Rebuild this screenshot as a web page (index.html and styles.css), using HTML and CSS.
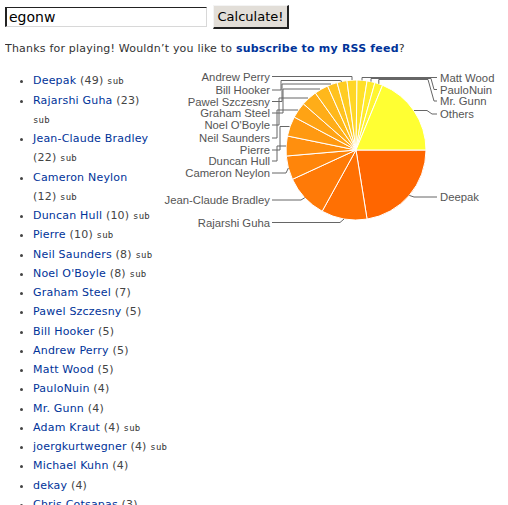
FILE: index.html
```html
<!DOCTYPE html>
<html>
<head>
<meta charset="utf-8">
<link rel="stylesheet" href="styles.css">
</head>
<body>
<form class="search">
  <input class="search-input" type="text" value="egonw">
  <button class="search-btn" type="button">Calculate!</button>
</form>
<p class="thanks">Thanks for playing! Wouldn’t you like to <a class="rss" href="#">subscribe to my RSS feed</a>?</p>
<div class="chart">
  <svg class="pie" width="351" height="180" viewBox="152 58 351 180" xmlns="http://www.w3.org/2000/svg">
    <g stroke="#fff" stroke-width="1" stroke-linejoin="round">
      <path fill="#FF6600" d="M356 150 L426 150 A70 70 0 0 1 367.05 219.12 Z"/>
      <path fill="#FF7003" d="M356 150 L367.05 219.12 A70 70 0 0 1 322.17 211.28 Z"/>
      <path fill="#FF7A07" d="M356 150 L322.17 211.28 A70 70 0 0 1 292.44 179.33 Z"/>
      <path fill="#FF850A" d="M356 150 L292.44 179.33 A70 70 0 0 1 286.26 156.04 Z"/>
      <path fill="#FF8F0E" d="M356 150 L286.26 156.04 A70 70 0 0 1 287.42 135.97 Z"/>
      <path fill="#FF9911" d="M356 150 L287.42 135.97 A70 70 0 0 1 294.22 117.06 Z"/>
      <path fill="#FFA314" d="M356 150 L294.22 117.06 A70 70 0 0 1 303.39 103.83 Z"/>
      <path fill="#FFAD18" d="M356 150 L303.39 103.83 A70 70 0 0 1 315.35 93.01 Z"/>
      <path fill="#FFB81B" d="M356 150 L315.35 93.01 A70 70 0 0 1 327.60 86.02 Z"/>
      <path fill="#FFC21F" d="M356 150 L327.60 86.02 A70 70 0 0 1 337.07 82.61 Z"/>
      <path fill="#FFCC22" d="M356 150 L337.07 82.61 A70 70 0 0 1 346.95 80.59 Z"/>
      <path fill="#FFD625" d="M356 150 L346.95 80.59 A70 70 0 0 1 357.01 80.01 Z"/>
      <path fill="#FFE029" d="M356 150 L357.01 80.01 A70 70 0 0 1 367.05 80.88 Z"/>
      <path fill="#FFEB2C" d="M356 150 L367.05 80.88 A70 70 0 0 1 374.93 82.61 Z"/>
      <path fill="#FFF530" d="M356 150 L374.93 82.61 A70 70 0 0 1 382.55 85.23 Z"/>
      <path fill="#FFFF33" d="M356 150 L382.55 85.23 A70 70 0 0 1 426 150 Z"/>
    </g>
    <g fill="none" stroke="#666" stroke-width="1">
      <path d="M272 76.5 H352 V80"/>
      <path d="M272 90 H281 V80.5 H340 L342 81.5"/>
      <path d="M272 101.5 H282 V84 H331"/>
      <path d="M272 113 H283 V89 H320"/>
      <path d="M272 125 H279 V98 H308"/>
      <path d="M272 138 H277 V110 H298"/>
      <path d="M272 150 H280 V126.5 H289.5"/>
      <path d="M272 161 H277 V146 H286"/>
      <path d="M272 173 H286 L288.4 168"/>
      <path d="M272 200 H301 L304.8 197.7"/>
      <path d="M272 222.5 H340 L344 219"/>
      <path d="M437 77.5 H362 V80.3"/>
      <path d="M437 89.5 H434 L431 78.5 H371 V81.6"/>
      <path d="M437 101 H434 L428 79.5 H378.8 V83.8"/>
      <path d="M437 114 H432 L427 110.5 H414"/>
      <path d="M437 197 H414 L409.3 195.4"/>
    </g>
    <g class="labels" text-anchor="end">
      <text x="270" y="76.5">Andrew Perry</text>
      <text x="270" y="90">Bill Hooker</text>
      <text x="270" y="101.5">Pawel Szczesny</text>
      <text x="270" y="113">Graham Steel</text>
      <text x="270" y="125">Noel O'Boyle</text>
      <text x="270" y="138">Neil Saunders</text>
      <text x="270" y="150">Pierre</text>
      <text x="270" y="161">Duncan Hull</text>
      <text x="270" y="173">Cameron Neylon</text>
      <text x="270" y="200">Jean-Claude Bradley</text>
      <text x="270" y="222.5">Rajarshi Guha</text>
    </g>
    <g class="labels">
      <text x="440" y="77.5">Matt Wood</text>
      <text x="440" y="89.5">PauloNuin</text>
      <text x="440" y="101">Mr. Gunn</text>
      <text x="440" y="114">Others</text>
      <text x="440" y="197">Deepak</text>
    </g>
  </svg>
</div>
<ul class="people">
  <li><a href="#">Deepak</a> (49) <span class="sub">sub</span></li>
  <li><a href="#">Rajarshi Guha</a> (23) <span class="sub">sub</span></li>
  <li><a href="#">Jean-Claude Bradley</a> (22) <span class="sub">sub</span></li>
  <li><a href="#">Cameron Neylon</a> (12) <span class="sub">sub</span></li>
  <li><a href="#">Duncan Hull</a> (10) <span class="sub">sub</span></li>
  <li><a href="#">Pierre</a> (10) <span class="sub">sub</span></li>
  <li><a href="#">Neil Saunders</a> (8) <span class="sub">sub</span></li>
  <li><a href="#">Noel O'Boyle</a> (8) <span class="sub">sub</span></li>
  <li><a href="#">Graham Steel</a> (7)</li>
  <li><a href="#">Pawel Szczesny</a> (5)</li>
  <li><a href="#">Bill Hooker</a> (5)</li>
  <li><a href="#">Andrew Perry</a> (5)</li>
  <li><a href="#">Matt Wood</a> (5)</li>
  <li><a href="#">PauloNuin</a> (4)</li>
  <li><a href="#">Mr. Gunn</a> (4)</li>
  <li><a href="#">Adam Kraut</a> (4) <span class="sub">sub</span></li>
  <li><a href="#">joergkurtwegner</a> (4) <span class="sub">sub</span></li>
  <li><a href="#">Michael Kuhn</a> (4)</li>
  <li><a href="#">dekay</a> (4)</li>
  <li><a href="#">Chris Cotsapas</a> (3)</li>
</ul>
</body>
</html>
```

FILE: styles.css
```css
html, body {
  background: #fff;
}
body {
  margin: 5px;
  font-family: "DejaVu Sans", Verdana, sans-serif;
  font-size: 11px;
  line-height: 1.75;
  letter-spacing: 0.2px;
  color: #333;
}
a {
  color: #003399;
  text-decoration: none;
}
.search {
  display: flex;
  align-items: center;
  gap: 6px;
  margin: 0;
  height: 24px;
  letter-spacing: 0;
}
.search-input {
  box-sizing: border-box;
  width: 202px;
  height: 20px;
  margin: 0;
  padding: 0 2px;
  border-style: solid;
  border-width: 1px 1px 1px 2px;
  border-color: #222 #d8d8d8 #d8d8d8 #222;
  font-family: "DejaVu Sans", sans-serif;
  font-size: 14px;
  color: #000;
  background: #fff;
}
.search-btn {
  box-sizing: border-box;
  width: 76px;
  height: 24px;
  margin: 0;
  padding: 0;
  border-style: solid;
  border-width: 1px 2px 2px 1px;
  border-color: #f4f4f4 #222 #222 #f4f4f4;
  background: #e2ded8;
  font-family: "DejaVu Sans", sans-serif;
  font-size: 13px;
  color: #000;
}
.thanks {
  margin: 10px 0 0;
}
.rss {
  font-weight: bold;
}
.chart {
  float: right;
  width: 351px;
  height: 180px;
}
.pie {
  display: block;
}
.labels {
  font-family: "Liberation Sans", Arial, sans-serif;
  font-size: 11.3px;
  letter-spacing: 0;
  fill: #555;
  dominant-baseline: central;
}
.people {
  margin: 13px 0 0;
  padding: 0 0 0 28px;
  color: #444;
}
.sub {
  font-family: "DejaVu Sans Mono", monospace;
  font-size: 9px;
  color: #333;
}
```
